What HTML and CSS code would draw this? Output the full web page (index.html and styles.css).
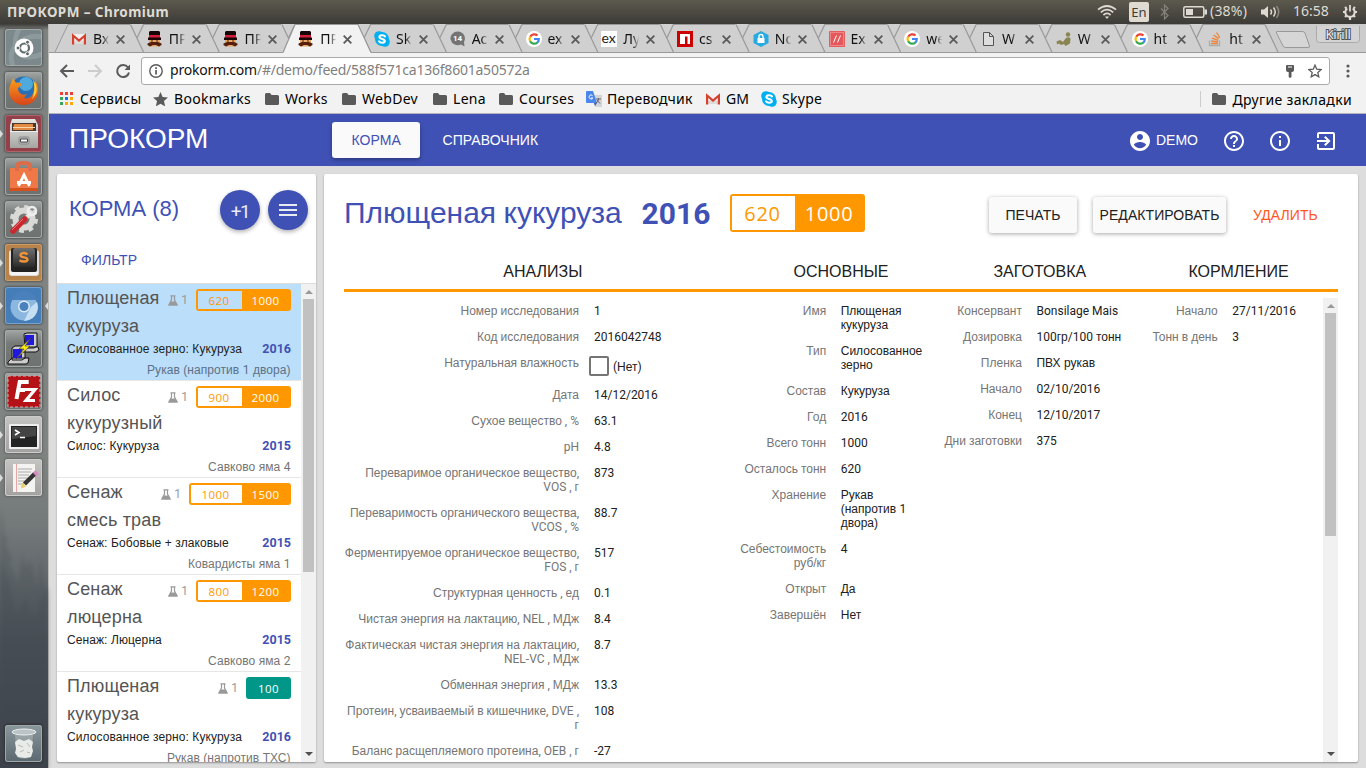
FILE: index.html
```html
<!DOCTYPE html>
<html lang="ru">
<head>
<meta charset="utf-8">
<title>ПРОКОРМ</title>
<link rel="stylesheet" href="styles.css">
</head>
<body>
<svg width="0" height="0" class="defs">
  <defs>
    <linearGradient id="ff" x1="0" y1="0" x2="0" y2="1"><stop offset="0" stop-color="#f8a01c"/><stop offset="1" stop-color="#d9431a"/></linearGradient>
    <linearGradient id="cab" x1="0" y1="0" x2="0" y2="1"><stop offset="0" stop-color="#e6e6e2"/><stop offset="1" stop-color="#a5a5a1"/></linearGradient>
    <linearGradient id="key" x1="0" y1="0" x2="0" y2="1"><stop offset="0" stop-color="#707070"/><stop offset="1" stop-color="#2b2b2b"/></linearGradient>
  </defs>
  <symbol id="gmail" viewBox="0 0 16 16"><path d="M1 3h14v10H1z" fill="#f3f1f0"/><path d="M1 13l5-5 2 2 2-2 5 5z" fill="#dedbd9"/><path d="M2.100 13.500V4.500l5.900 5 5.900-5v9" fill="none" stroke="#d5402f" stroke-width="2.200"/></symbol>
  <symbol id="hat" viewBox="0 0 16 16"><path d="M3 0h9l1 1v4H2V1z" fill="#160606"/><path d="M2 4h11v3H2z" fill="#d51f3a"/><path d="M1 6.500h13V9H1z" fill="#1a0606"/><path d="M2 9h11v6.500H2z" fill="#e8a765"/><path d="M4 9.500h2v1H4zM9 9.500h2v1H9z" fill="#552211"/><path d="M.5 12.500L4 11h7l3.500 1.500V14L12 15.500 9 14H6l-3 1.500L.5 14z" fill="#57200d"/></symbol>
  <symbol id="skype" viewBox="0 0 16 16"><circle cx="5" cy="5" r="4.800" fill="#00aff0"/><circle cx="11" cy="11" r="4.800" fill="#00aff0"/><circle cx="8" cy="8" r="7" fill="#00aff0"/><path d="M11 5.400C10 3.800 5.400 3.900 5.400 6c0 2.300 5.400 1.500 5.400 4 0 2.200-4.600 2.200-5.800.3" fill="none" stroke="#fff" stroke-width="2.100" stroke-linecap="round"/></symbol>
  <symbol id="google" viewBox="0 0 16 16"><circle cx="8" cy="8" r="8" fill="#fff"/><g fill="none" stroke-width="2.200"><path d="M4.200 5.700A4.800 4.800 0 0 1 11.500 4.500" stroke="#ea4335"/><path d="M4.200 5.600a4.900 4.900 0 0 0 0 4.800" stroke="#fbbc05"/><path d="M4.100 10.300a4.800 4.800 0 0 0 7.200 1.300" stroke="#34a853"/><path d="M8 8h4.800a4.800 4.800 0 0 1-1.600 3.700" stroke="#4285f4"/></g></symbol>
  <symbol id="x" viewBox="0 0 8 8"><path d="M.6.6l6.800 6.800M7.400.6L.6 7.400" stroke="#5a5a5a" stroke-width="1.600"/></symbol>
  <symbol id="folder" viewBox="0 0 14 12"><path d="M0 1.500Q0 0 1.500 0H5l1.500 2H12.500Q14 2 14 3.500V10.500Q14 12 12.500 12H1.500Q0 12 0 10.500z" fill="#5a5a5a"/></symbol>
  <symbol id="edge" overflow="visible"><path d="M-13 .5L0 28M-6.500 14L0 .5H62" fill="none" stroke="#999" stroke-width="1.200"/></symbol>
  <symbol id="flask" viewBox="0 0 10 11"><path d="M2.500.8h5M3.500 1v4L.8 10h8.400L6.500 5V1" fill="none" stroke="#999" stroke-width="1.200"/><path d="M2.500 6.500h5L9.500 10.500H.5z" fill="#999"/></symbol>
</svg>

<header class="topbar">
  <span class="topbar-title">ПРОКОРМ – Chromium</span>
  <div class="tray">
    <svg class="t-wifi" width="20" height="14" viewBox="0 0 20 14" fill="none" stroke="#dfdbd2" stroke-width="1.700"><path d="M1 4.600Q10-2.600 19 4.600M3.800 7.300Q10 2 16.200 7.300M6.400 10Q10 6.800 13.600 10"/><path d="M8 11.500h4L10 14z" fill="#dfdbd2" stroke="none"/></svg>
    <span class="t-lang">En</span>
    <svg class="t-bt" width="10" height="16" viewBox="0 0 10 16" fill="none" stroke="#85827a" stroke-width="1.200"><path d="M1 4.500l7 7-3.500 3.500V1L8 4.500l-7 7"/></svg>
    <svg class="t-bat" width="24" height="12" viewBox="0 0 24 12"><rect x=".8" y=".8" width="20" height="10.400" rx="1.500" fill="none" stroke="#dfdbd2" stroke-width="1.500"/><path d="M3 3h7v6H3zM21.500 3.500H24v5h-2.500z" fill="#dfdbd2"/></svg>
    <span class="t-pct">(38%)</span>
    <svg class="t-vol" width="20" height="14" viewBox="0 0 20 14" fill="none" stroke="#dfdbd2" stroke-width="1.500"><path d="M0 4.500h3L7 1v12L3 9.500H0z" fill="#dfdbd2" stroke="none"/><path d="M9.500 4.500q2 2.500 0 5M12.500 2.500q3.500 4.500 0 9"/><path d="M15.500 1q4.500 6 0 12" stroke="#8a877e"/></svg>
    <span class="t-time">16:58</span>
    <svg class="t-gear" width="16" height="16" viewBox="0 0 16 16" fill="none" stroke="#dfdbd2"><path d="M5.200 4.400a4.700 4.700 0 1 0 5.600 0" stroke-width="2"/><path d="M8 1v6.500" stroke-width="1.800"/><path d="M1 8h2M13 8h2M8 13v3M3 13l1.500-1.500M13 13l-1.500-1.500M3 3l1.300 1.300M13 3l-1.300 1.300" stroke-width="2.200"/></svg>
  </div>
</header>

<div class="desktop">
<nav class="launcher">
  <svg class="trees" width="48" height="270" viewBox="0 0 48 270"><path d="M0 10l4 18-2 2 6 14-3 1 8 18-4 1 9 22 4-30 4 14 5-8 6 28 3-32 4 28 4 10v174H0z" fill="#3e464b" opacity=".25"/><path d="M0 60l10 30 6 26 10-16 8 20 12-30 2 0v180H0z" fill="#3e464b" opacity=".2"/></svg>
  <div class="tile ubuntu"><svg viewBox="0 0 37 37"><path d="M8 37C0 18 20 4 37 8M14 0C3 22 18 34 37 25" stroke="#b0babd" stroke-width="5" fill="none" opacity=".35"/><circle cx="19" cy="19" r="9.500" fill="#fff"/><circle cx="19.500" cy="19" r="4.500" fill="none" stroke="#606a6c" stroke-width="2.200"/><g fill="#606a6c" stroke="#fff"><circle cx="13" cy="19" r="2"/><circle cx="22.500" cy="13.200" r="2"/><circle cx="22.500" cy="24.800" r="2"/></g></svg></div>
  <div class="tile"><svg viewBox="0 0 37 37"><circle cx="19" cy="18" r="13.500" fill="#2a6fb5"/><circle cx="21" cy="12" r="7" fill="#4fa9dc"/><path d="M4 16L8 6l3 5c3-1 5 0 6 2l-4 3c0 5 4 8 9 6l-3 4c5 2 10-3 10-9l1-8c7 9 2 24-11 24C9 33 3 25 4 16z" fill="url(#ff)"/><path d="M28 8c6 7 4 15-1 19 3-7 3-13 1-19z" fill="#fbd535"/></svg></div>
  <div class="tile files"><i class="pip"></i><svg viewBox="0 0 37 37"><path d="M7 4h23l3 6v23H5V10z" fill="url(#cab)"/><path d="M7 8h24v8H7z" fill="#463b33"/><path d="M9 9h19v6H8z" fill="#e58a43"/><path d="M8 12h22v1H8z" fill="#f8d8a8"/><path d="M5 16.500h28" stroke="#eee"/><rect x="14" y="22" width="10" height="7" rx="1.500" fill="#bbb" stroke="#888"/><path d="M15.500 24h7v3h-7z" fill="#fff" stroke="#444"/></svg></div>
  <div class="tile"><svg viewBox="0 0 37 37"><path d="M5 10h28v22H5z" fill="#f07746"/><path d="M5 30h28v3H5z" fill="#d2511c"/><path d="M12 13V8q0-3 6.500-3T25 8v5" fill="none" stroke="#dc6d48" stroke-width="4"/><path d="M13.500 28L19 17l5.500 11M12 24.500h14" fill="none" stroke="#fff" stroke-width="2.800"/></svg></div>
  <div class="tile"><svg viewBox="0 0 37 37"><circle cx="19" cy="18" r="8.500" fill="none" stroke="#d9d9d6" stroke-width="6"/><circle cx="19" cy="18" r="12" fill="none" stroke="#d9d9d6" stroke-width="4" stroke-dasharray="4.700"/><path d="M27 11L18 20" stroke="#e5e5e3" stroke-width="4"/><circle cx="27" cy="10" r="4" fill="none" stroke="#eee" stroke-width="2.500"/><path d="M20 18L8 30" stroke="#c9292e" stroke-width="5.500" stroke-linecap="round"/><path d="M18 18L7 29" stroke="#ec7777" stroke-width="1"/></svg></div>
  <div class="tile sublime"><i class="pip"></i><svg viewBox="0 0 37 37"><rect x="4" y="6" width="30" height="26" rx="3" fill="#ddd"/><rect x="5" y="27" width="28" height="4" rx="2" fill="#f4f4f4"/><rect x="6" y="4" width="26" height="24" rx="2" fill="#222"/><rect x="8" y="4" width="22" height="19" rx="2" fill="url(#key)"/><path d="M22.500 10.500c-2-2-7-2-7 .7s7 1.600 7 4.300-5.500 2.500-8 .7" fill="none" stroke="#f29436" stroke-width="2.400"/></svg></div>
  <div class="tile chromium"><i class="pip"></i><i class="pip right"></i><svg viewBox="0 0 37 37"><circle cx="19" cy="20" r="13.500" fill="#8cb7df"/><path d="M6 13a14 14 0 0 1 26 0H19z" fill="#4a80bb"/><path d="M32 15a14 14 0 0 1-13 19l7-14z" fill="#c6dff3"/><circle cx="19" cy="19.500" r="6" fill="#dcecf8"/><circle cx="19" cy="19.500" r="4.500" fill="#4a82bd"/></svg></div>
  <div class="tile"><svg viewBox="0 0 37 37"><g stroke="#111" fill="#ccc"><path d="M19 4l3-1h10v13l-3 2h-9zM16 20l4-3h13l1 3-3 2H16zM7 18l3-2h10v12l-3 2H7zM3 32l4-4h17l-1 5-2 1H3z"/></g><path d="M20 5h9v10h-9zM8 19h9v9H8z" fill="#2018df"/><path d="M26 8L14 19h5l-8 10 14-13h-5z" fill="#ffec12" stroke="#333" stroke-width=".6"/></svg></div>
  <div class="tile"><svg viewBox="0 0 37 37"><rect x="3" y="3" width="32" height="31" fill="#b51217" stroke="#d9adad" stroke-dasharray="3 2"/><path d="M11.500 26l3.200-17h9M13 17h7" stroke="#fff" stroke-width="4" fill="none"/><path d="M20 16.500h10l-9 11h9" stroke="#fff" stroke-width="3.200" fill="none"/></svg></div>
  <div class="tile light"><i class="pip"></i><svg viewBox="0 0 37 37"><rect x="4" y="8" width="30" height="25" rx="1" fill="#eee"/><rect x="6" y="10" width="26" height="21" fill="#222"/><path d="M7 11h24v9L7 23z" fill="#444"/><path d="M10 14l4 2.500-4 2.500M15 21.500h5" fill="none" stroke="#fff" stroke-width="1.600"/></svg></div>
  <div class="tile light"><i class="pip"></i><svg viewBox="0 0 37 37"><path d="M8 5h22v28H8z" fill="#f3f3ef"/><path d="M11.500 5v28" stroke="#e9a5a5"/><path d="M13 10h14M13 13h13M13 16h11M13 19h12M13 22h8M13 25h6" stroke="#aaa"/><path d="M30 14.500L19.500 25" stroke="#333" stroke-width="4.500"/><path d="M17 23.500l4 4-5 2z" fill="#e6cd65"/><path d="M32 13l-2.500 2.500" stroke="#d889bd" stroke-width="5"/></svg></div>
  <div class="tile trash"><svg viewBox="0 0 37 37"><path d="M10 10l2 22q7 3 14 0l2-22" fill="#aab4b5" opacity=".6"/><ellipse cx="19" cy="7" rx="12" ry="3" fill="#bac3c5" stroke="#eef1f1"/><path d="M10 17l4-3 5 2 5-2 4 3-1 5 1 4-2 6-6 1-7-1-3-4 1-4z" fill="#e9ebe8"/><path d="M13 20l5 2M22 18l3 4M15 27l4-2M22 27l3 1" stroke="#b5b9b5"/></svg></div>
</nav>

<div class="window">
  <div class="tabstrip">
    <svg class="tab-lines" width="1317" height="29" viewBox="49 0 1317 29">
      <path d="M49 29V0H1366V29z" fill="#ccc"/>
      <path d="M55 28L68 0H1265L1278 28z" fill="#d0d0d0"/>
      <path d="M55 28L68 .5H130M49 28.500H283M371 28.500H1366" fill="none" stroke="#999"/>
      <use href="#edge" x="143.500"/><use href="#edge" x="219.200"/><use href="#edge" x="295"/>
      <use href="#edge" x="370.600"/><use href="#edge" x="446.300"/><use href="#edge" x="522"/><use href="#edge" x="597.700"/><use href="#edge" x="673.400"/><use href="#edge" x="749.100"/><use href="#edge" x="824.800"/><use href="#edge" x="900.500"/><use href="#edge" x="976.200"/><use href="#edge" x="1051.900"/><use href="#edge" x="1127.400"/><use href="#edge" x="1202.900"/>
      <path d="M1265 .5L1278 28" stroke="#999" stroke-width="1.200"/>
      <path d="M283 29L295 .5H358L371 29z" fill="#f2f2f2"/><path d="M283 28.500L295 .5H358L371 28.500" fill="none" stroke="#999" stroke-width="1.200"/>
      <path d="M1277 7.500H1302Q1304 7.500 1305 9L1309.500 22Q1310 23.500 1308 23.500H1286Q1284 23.500 1283 22L1276.500 9Q1276 7.500 1277 7.500z" fill="#d6d6d6" stroke="#999"/>
      <path d="M1316.500 2V15.500Q1316.500 18.500 1319.500 18.500H1356.500Q1359.500 18.500 1359.500 15.500V2" fill="#d4d4d4" stroke="#aaa"/>
    </svg>
    <div class="tabs">
      <div class="tab"><svg class="fav"><use href="#gmail"/></svg><b>Вх</b><svg class="x"><use href="#x"/></svg></div>
      <div class="tab"><svg class="fav"><use href="#hat"/></svg><b>ПР</b><svg class="x"><use href="#x"/></svg></div>
      <div class="tab"><svg class="fav"><use href="#hat"/></svg><b>ПР</b><svg class="x"><use href="#x"/></svg></div>
      <div class="tab"><svg class="fav"><use href="#hat"/></svg><b>ПР</b><svg class="x"><use href="#x"/></svg></div>
      <div class="tab"><svg class="fav"><use href="#skype"/></svg><b>Sk</b><svg class="x"><use href="#x"/></svg></div>
      <div class="tab"><svg class="fav" viewBox="0 0 16 16"><path d="M8 .5a7.300 6.800 0 1 0 3 12.900l3.500 2-.5-4.400A7 7 0 0 0 8 .5z" fill="#747474"/><text x="3" y="10" class="fav-n">14</text></svg><b>Ас</b><svg class="x"><use href="#x"/></svg></div>
      <div class="tab"><svg class="fav"><use href="#google"/></svg><b>ex</b><svg class="x"><use href="#x"/></svg></div>
      <div class="tab"><svg class="fav" viewBox="0 0 16 16"><path d="M0 0h16v16H0z" fill="#fff"/><text x=".5" y="12" class="fav-ex">ex</text></svg><b>Лу</b><svg class="x"><use href="#x"/></svg></div>
      <div class="tab"><svg class="fav" viewBox="0 0 16 16"><path d="M0 0h16v16H0z" fill="#c00"/><path d="M3 3h10v10h-2.500V5.500H8V13H3z" fill="#fff"/></svg><b>cs</b><svg class="x"><use href="#x"/></svg></div>
      <div class="tab"><svg class="fav" viewBox="0 0 16 16"><path d="M8 0l7.500 4v8L8 16 .5 12V4z" fill="#27aae1"/><path d="M4.500 7h7v5h-7z" fill="#fff"/><path d="M6 7V5.500a2 2 0 0 1 4 0V7" fill="none" stroke="#fff" stroke-width="1.400"/></svg><b>No</b><svg class="x"><use href="#x"/></svg></div>
      <div class="tab"><svg class="fav" viewBox="0 0 16 16"><path d="M.5.5h15v15H.5z" fill="#ee8586" stroke="#e65b5e"/><path d="M2 2h12v12H2z" fill="#e4575a"/><path d="M4.500 11.500l3-7M8.500 11.500l3-7" stroke="#fff"/></svg><b>Ex</b><svg class="x"><use href="#x"/></svg></div>
      <div class="tab"><svg class="fav"><use href="#google"/></svg><b>we</b><svg class="x"><use href="#x"/></svg></div>
      <div class="tab"><svg class="fav" viewBox="0 0 16 16"><path d="M3.500 1.500h6l4 4v9h-10zM9.500 1.500v4h4" fill="#ddd" stroke="#555"/></svg><b>W</b><svg class="x"><use href="#x"/></svg></div>
      <div class="tab"><svg class="fav" viewBox="0 0 16 16"><circle cx="12" cy="3.500" r="2.200" fill="#8a8450"/><path d="M.5 10.500l3.500-1.500 3 2 2.500-3.500q3-2.500 5 0l-.5 5-4.500 2.500-1.500-2-3 1-2-1.500-2 1z" fill="#8a8450"/></svg><b>W</b><svg class="x"><use href="#x"/></svg></div>
      <div class="tab"><svg class="fav"><use href="#google"/></svg><b>ht</b><svg class="x"><use href="#x"/></svg></div>
      <div class="tab"><svg class="fav" viewBox="0 0 16 16" fill="none"><path d="M2.500 9.500V14.500H12.500V9.500" stroke="#aaa" stroke-width="1.300"/><path d="M4 12.500h7M4.200 10l6.800.9M5 7.200l6.200 2.200M6.500 4l5.300 3.600M9.500 1.500l3.300 5" stroke="#ef8236" stroke-width="1.300"/></svg><b>ht</b><svg class="x"><use href="#x"/></svg></div>
    </div>
    <span class="user-chip">Kirill</span>
  </div>
  <div class="toolbar">
    <svg class="nav-icons" width="92" height="30" viewBox="0 0 92 30" fill="none" stroke-width="2"><path d="M25 15H12M18 9l-6 6 6 6" stroke="#5a5a5a"/><path d="M39 15h13M46 9l6 6-6 6" stroke="#ccc"/><path d="M79 11.500a6 6 0 1 0 1 5" stroke="#5a5a5a"/><path d="M81 8.500V14h-5.500z" fill="#5a5a5a"/></svg>
    <div class="omnibox">
      <svg width="14" height="14" viewBox="0 0 14 14"><circle cx="7" cy="7" r="6.200" fill="none" stroke="#5a5a5a" stroke-width="1.400"/><path d="M6.200 6h1.700v4.500H6.200zM6.200 3.300h1.700V5H6.200z" fill="#5a5a5a"/></svg>
      <span class="url">prokorm.com<em>/#/demo/feed/588f571ca136f8601a50572a</em></span>
      <svg class="key" width="8" height="13" viewBox="0 0 8 13"><path d="M0 1q0-1 1-1h6q1 0 1 1v4q0 2-2 2H5.500v5L4 13 2.700 12V7H2Q0 7 0 5z" fill="#5a5a5a"/><path d="M2 2h4" stroke="#fff"/></svg>
      <svg width="14" height="14" viewBox="0 0 24 24"><path d="M12 2l3 7 7.500.700-5.700 5 1.700 7.300L12 18.200 5.500 22l1.700-7.300-5.700-5L9 9z" fill="none" stroke="#5a5a5a" stroke-width="2.200"/></svg>
    </div>
    <svg class="menu" width="4" height="14" viewBox="0 0 4 14" fill="#5a5a5a"><circle cx="2" cy="2" r="1.600"/><circle cx="2" cy="7" r="1.600"/><circle cx="2" cy="12" r="1.600"/></svg>
  </div>
  <div class="bookmarks">
    <div class="bm b1"><svg width="13" height="13" viewBox="0 0 13 13"><path d="M0 0h3v3H0zM5 0h3v3H5zM10 0h3v3h-3z" fill="#ea4335"/><path d="M0 5h3v3H0zM0 10h3v3H0z" fill="#34a853"/><path d="M5 5h3v3H5z" fill="#1a73e8"/><path d="M10 5h3v3h-3zM5 10h3v3H5zM10 10h3v3h-3z" fill="#fbab05"/></svg>Сервисы</div>
    <div class="bm b2"><svg width="15" height="14" viewBox="1 1 22 21"><path d="M12 1l3.200 7.600 8 .700-6 5.300 1.800 8L12 18.500 5 22.600l1.800-8-6-5.300 8-.7z" fill="#5a5a5a"/></svg>Bookmarks</div>
    <div class="bm b3"><svg width="14" height="12"><use href="#folder"/></svg>Works</div>
    <div class="bm b4"><svg width="14" height="12"><use href="#folder"/></svg>WebDev</div>
    <div class="bm b5"><svg width="14" height="12"><use href="#folder"/></svg>Lena</div>
    <div class="bm b6"><svg width="14" height="12"><use href="#folder"/></svg>Courses</div>
    <div class="bm b7"><svg width="16" height="16" viewBox="0 0 16 16"><path d="M6 4h10v12H9z" fill="#d5d5d5"/><path d="M0 1q0-1 1-1h6l4 12H1q-1 0-1-1z" fill="#4a86ee"/><path d="M8 12h3l-2 3z" fill="#2a56c6"/><path d="M6.500 4.500a2 2 0 1 0 .3 2.500H5" fill="none" stroke="#fff"/><path d="M10 8h5M12.500 7v1q0 3-2.500 4M11 9l3 3.500" fill="none" stroke="#667"/></svg>Переводчик</div>
    <div class="bm b8"><svg width="16" height="16"><use href="#gmail"/></svg>GM</div>
    <div class="bm b9"><svg width="16" height="16"><use href="#skype"/></svg>Skype</div>
    <div class="bm other"><svg width="14" height="12"><use href="#folder"/></svg>Другие закладки</div>
  </div>

  <div class="app">
    <div class="appbar">
      <h1>ПРОКОРМ</h1>
      <a class="navbtn active">КОРМА</a><a class="navbtn">СПРАВОЧНИК</a>
      <div class="actions">
        <svg viewBox="0 0 24 24"><path d="M12 2C6.480 2 2 6.480 2 12s4.480 10 10 10 10-4.480 10-10S17.520 2 12 2zm0 3c1.660 0 3 1.340 3 3s-1.340 3-3 3-3-1.340-3-3 1.340-3 3-3zm0 14.200c-2.500 0-4.710-1.280-6-3.220.030-1.990 4-3.080 6-3.080 1.990 0 5.970 1.090 6 3.080-1.290 1.940-3.500 3.220-6 3.220z"/></svg>
        <span class="demo">DEMO</span>
        <svg class="help" viewBox="0 0 24 24"><path d="M11 18h2v-2h-2v2zm1-16C6.480 2 2 6.480 2 12s4.480 10 10 10 10-4.480 10-10S17.520 2 12 2zm0 18c-4.410 0-8-3.590-8-8s3.590-8 8-8 8 3.590 8 8-3.590 8-8 8zm0-14c-2.210 0-4 1.790-4 4h2c0-1.100.9-2 2-2s2 .9 2 2c0 2-3 1.750-3 5h2c0-2.250 3-2.500 3-5 0-2.210-1.790-4-4-4z"/></svg>
        <svg class="info" viewBox="0 0 24 24"><path d="M11 17h2v-6h-2v6zm1-15C6.480 2 2 6.480 2 12s4.480 10 10 10 10-4.480 10-10S17.520 2 12 2zm0 18c-4.410 0-8-3.590-8-8s3.590-8 8-8 8 3.590 8 8-3.590 8-8 8zM11 9h2V7h-2v2z"/></svg>
        <svg class="exit" viewBox="0 0 24 24"><path d="M10.090 15.590L11.500 17l5-5-5-5-1.410 1.410L12.670 11H3v2h9.670l-2.580 2.590zM19 3H5c-1.110 0-2 .9-2 2v4h2V5h14v14H5v-4H3v4c0 1.100.890 2 2 2h14c1.100 0 2-.9 2-2V5c0-1.100-.9-2-2-2z"/></svg>
      </div>
    </div>

    <div class="content">
      <aside class="card side">
        <div class="side-head"><h2>КОРМА <span>(8)</span></h2><span class="fab plus">+1</span><span class="fab"><svg width="24" height="24" viewBox="0 0 24 24"><path d="M3 18h18v-2H3v2zm0-5h18v-2H3v2zm0-7v2h18V6H3z" fill="#e8eaf6"/></svg></span></div>
        <div class="filter">ФИЛЬТР</div>
        <div class="list">
          <div class="items">
            <div class="item sel"><div class="row1"><span class="name">Плющеная кукуруза</span><span class="lab r"><svg><use href="#flask"/></svg>1</span><span class="badge"><i>620</i><u>1000</u></span></div><div class="row2"><span>Силосованное зерно: Кукуруза</span><b class="r">2016</b></div><div class="row3">Рукав (напротив <span class="r">1</span> двора)</div></div>
            <div class="item"><div class="row1"><span class="name">Силос кукурузный</span><span class="lab r"><svg><use href="#flask"/></svg>1</span><span class="badge"><i>900</i><u>2000</u></span></div><div class="row2"><span>Силос: Кукуруза</span><b class="r">2015</b></div><div class="row3">Савково яма <span class="r">4</span></div></div>
            <div class="item"><div class="row1"><span class="name">Сенаж смесь трав</span><span class="lab r"><svg><use href="#flask"/></svg>1</span><span class="badge wide"><i>1000</i><u>1500</u></span></div><div class="row2"><span>Сенаж: Бобовые + злаковые</span><b class="r">2015</b></div><div class="row3">Ковардисты яма <span class="r">1</span></div></div>
            <div class="item"><div class="row1"><span class="name">Сенаж люцерна</span><span class="lab r"><svg><use href="#flask"/></svg>1</span><span class="badge"><i>800</i><u>1200</u></span></div><div class="row2"><span>Сенаж: Люцерна</span><b class="r">2015</b></div><div class="row3">Савково яма <span class="r">2</span></div></div>
            <div class="item"><div class="row1"><span class="name">Плющеная кукуруза</span><span class="lab r"><svg><use href="#flask"/></svg>1</span><span class="badge teal"><u>100</u></span></div><div class="row2"><span>Силосованное зерно: Кукуруза</span><b class="r">2016</b></div><div class="row3">Рукав (напротив ТХС)</div></div>
          </div>
          <div class="scroll"><i class="up"></i><i class="thumb"></i><i class="down"></i></div>
        </div>
      </aside>

      <main class="card main">
        <div class="main-head">
          <h2>Плющеная кукуруза</h2><b class="year r">2016</b>
          <span class="badge big"><i>620</i><u>1000</u></span>
          <div class="buttons"><a class="btn print">ПЕЧАТЬ</a><a class="btn edit">РЕДАКТИРОВАТЬ</a><a class="del">УДАЛИТЬ</a></div>
        </div>
        <div class="heads"><span>АНАЛИЗЫ</span><span>ОСНОВНЫЕ</span><span>ЗАГОТОВКА</span><span>КОРМЛЕНИЕ</span></div>
        <div class="body">
          <dl class="wide">
            <dt>Номер исследования</dt><dd class="r">1</dd>
            <dt>Код исследования</dt><dd class="r">2016042748</dd>
            <dt>Натуральная влажность</dt><dd class="check"><i></i><span><span class="r">(</span>Нет<span class="r">)</span></span></dd>
            <dt>Дата</dt><dd class="r">14/12/2016</dd>
            <dt>Сухое вещество<span class="r"> , %</span></dt><dd class="r">63.1</dd>
            <dt class="r">pH</dt><dd class="r">4.8</dd>
            <dt>Переваримое органическое вещество<span class="r">,</span><br><span class="r">VOS , </span>г</dt><dd class="r">873</dd>
            <dt>Переваримость органического вещества<span class="r">,</span><br><span class="r">VCOS , %</span></dt><dd class="r">88.7</dd>
            <dt>Ферментируемое органическое вещество<span class="r">,</span><br><span class="r">FOS , </span>г</dt><dd class="r">517</dd>
            <dt>Структурная ценность<span class="r"> , </span>ед</dt><dd class="r">0.1</dd>
            <dt>Чистая энергия на лактацию<span class="r">, NEL , </span>МДж</dt><dd class="r">8.4</dd>
            <dt>Фактическая чистая энергия на лактацию<span class="r">,</span><br><span class="r">NEL-VC , </span>МДж</dt><dd class="r">8.7</dd>
            <dt>Обменная энергия<span class="r"> , </span>МДж</dt><dd class="r">13.3</dd>
            <dt>Протеин<span class="r">, </span>усваиваемый в кишечнике<span class="r">, DVE ,</span><br>г</dt><dd class="r">108</dd>
            <dt>Баланс расщепляемого протеина<span class="r">, OEB , </span>г</dt><dd class="r">-27</dd>
          </dl>
          <dl>
            <dt>Имя</dt><dd>Плющеная<br>кукуруза</dd>
            <dt>Тип</dt><dd>Силосованное<br>зерно</dd>
            <dt>Состав</dt><dd>Кукуруза</dd>
            <dt>Год</dt><dd class="r">2016</dd>
            <dt>Всего тонн</dt><dd class="r">1000</dd>
            <dt>Осталось тонн</dt><dd class="r">620</dd>
            <dt>Хранение</dt><dd>Рукав<br>(напротив <span class="r">1</span><br>двора)</dd>
            <dt>Себестоимость<br>руб/кг</dt><dd class="r">4</dd>
            <dt>Открыт</dt><dd>Да</dd>
            <dt>Завершён</dt><dd>Нет</dd>
          </dl>
          <dl>
            <dt>Консервант</dt><dd class="r">Bonsilage Mais</dd>
            <dt>Дозировка</dt><dd><span class="r">100</span>гр<span class="r">/100 </span>тонн</dd>
            <dt>Пленка</dt><dd>ПВХ рукав</dd>
            <dt>Начало</dt><dd class="r">02/10/2016</dd>
            <dt>Конец</dt><dd class="r">12/10/2017</dd>
            <dt>Дни заготовки</dt><dd class="r">375</dd>
          </dl>
          <dl>
            <dt>Начало</dt><dd class="r">27/11/2016</dd>
            <dt>Тонн в день</dt><dd class="r">3</dd>
          </dl>
          <div class="scroll"><i class="up"></i><i class="thumb"></i><i class="down"></i></div>
        </div>
      </main>
    </div>
  </div>
</div>
</div>
</body>
</html>
```
FILE: styles.css
```css
* { box-sizing: border-box; }
body { margin: 0; width: 1366px; height: 768px; overflow: hidden; font-family: "Liberation Sans", Arial, sans-serif; background: #ddd; }
h1, h2, dl, dd { margin: 0; font-weight: 400; }
i, em, u { font-style: normal; text-decoration: none; }
svg { display: block; flex: none; }
.defs { position: absolute; }
.r { font-family: Roboto, sans-serif; }

/* system panel */
.topbar { height: 24px; display: flex; justify-content: space-between; align-items: center; background: linear-gradient(#5c584b 0, #59564c 10%, #3d3b37 100%); color: #dfdbd2; font: 14px "Noto Sans", sans-serif; }
.topbar-title { padding-left: 7px; font-size: 13.500px; font-weight: 700; letter-spacing: .42px; }
.tray { width: 269px; display: flex; align-items: center; height: 24px; }
.t-lang { margin-left: 12px; width: 20px; height: 20px; border-radius: 2px; background: #dfdbd2; color: #3f3d38; font-size: 13px; line-height: 20px; text-align: center; }
.t-bt { margin-left: 11px; }
.t-bat { margin-left: 13px; }
.t-pct { margin-left: 3px; width: 39px; font-size: 14px; line-height: 22px; padding-bottom: 2px; letter-spacing: .2px; }
.t-vol { margin-left: 12px; }
.t-time { margin-left: 12px; width: 38px; line-height: 22px; padding-bottom: 2px; }
.t-gear { margin-left: 11px; }

.desktop { display: flex; height: 744px; }
.launcher { position: relative; width: 49px; flex: none; padding: 5px 0 6px 5px; display: flex; flex-direction: column; gap: 6px; border-right: 1px solid #b9b9b6; background: linear-gradient(#3c3c38 0, #7e8280 6px, #808482 420px, #747a7a 500px, #4c525b 620px, #3e414b 100%); }
.trees { position: absolute; left: 0; bottom: 0; filter: blur(2px); }
.tile { position: relative; width: 37px; height: 37px; flex: none; border-radius: 3px; background: linear-gradient(#a2a6a4, #767a78 35%, #6d716f); box-shadow: 0 0 2px 1px #555a59, inset 0 0 0 1px #a4a8a6; }
.tile svg { width: 37px; height: 37px; }
.ubuntu { background: #7c898c; }
.files { background: #93404a; box-shadow: 0 0 2px 1px #555a59, inset 0 0 0 1px #b1636a; }
.sublime { background: #b8834b; box-shadow: 0 0 2px 1px #555a59, inset 0 0 0 1px #cc9d62; }
.chromium { background: #457db9; box-shadow: 0 0 2px 1px #555a59, inset 0 0 0 1px #76a1cf; }
.light { background: linear-gradient(#c4c4c2, #a3a19f); box-shadow: 0 0 2px 1px #666, inset 0 0 0 1px #ccc; }
.trash { margin-top: auto; background: linear-gradient(#8a979b, #5b6870); box-shadow: 0 0 2px 1px #333, inset 0 0 0 1px #9ba7aa; }
.pip { position: absolute; left: -5px; top: 15px; border: 4px solid transparent; border-left: 3px solid #ddd; border-right: 0; }
.pip.right { left: auto; right: -6px; border-left: 0; border-right: 3px solid #ddd; }

.window { flex: 1; min-width: 0; display: flex; flex-direction: column; }
.tabstrip { position: relative; height: 29px; }
.tab-lines { position: absolute; left: 0; top: 0; }
.tabs { position: relative; display: flex; padding-left: 22px; height: 29px; }
.tab { width: 75.750px; display: flex; align-items: center; flex: none; font: 14px "Noto Sans", sans-serif; color: #111; }
.fav { width: 16px; height: 16px; margin-top: 1px; }
.fav-n { font: 700 8px Roboto, sans-serif; fill: #fff; }
.fav-ex { font: 14px Lato, sans-serif; fill: #222; }
.tab b { font-weight: 400; margin-left: 6px; width: 17px; white-space: nowrap; line-height: 20px; -webkit-mask-image: linear-gradient(90deg, #000 55%, transparent 96%); }
.x { width: 9px; height: 9px; margin-left: 6px; margin-top: 1px; }
.user-chip { position: absolute; right: 6px; top: 0; width: 44px; text-align: center; font: 13px/20px "Noto Sans", sans-serif; letter-spacing: -.3px; color: #eee; -webkit-text-stroke: 2px #555; paint-order: stroke fill; }

.toolbar { height: 33px; display: flex; background: #f2f2f2; padding-top: 3px; }
.omnibox { margin-top: 1px; width: 1189px; height: 28px; border: 1px solid #aaa; border-radius: 3px; background: #fff; display: flex; align-items: center; padding: 0 7px; }
.url { margin-left: 7px; font: 14px/22px "Noto Sans", sans-serif; letter-spacing: -.23px; color: #111; flex: 1; padding-bottom: 2px; }
.url em { color: #808080; }
.key { margin-right: 14px; }
.menu { margin: 8px 0 0 16px; }
.bookmarks { height: 28px; display: flex; background: #f2f2f2; border-bottom: 1px solid #b6b4b6; padding-left: 11px; font: 14px "Noto Sans", sans-serif; letter-spacing: .3px; color: #000; }
.bm { display: flex; align-items: center; gap: 6px; white-space: nowrap; flex: none; height: 25px; }
.b1 { width: 93px; gap: 7px; }
.b2 { width: 112px; gap: 6px; }
.b3 { width: 77px; }
.b4 { width: 91px; }
.b5 { width: 66px; }
.b6 { width: 87px; }
.b7 { width: 119px; gap: 5px; }
.b8 { width: 56px; gap: 5px; letter-spacing: 0; }
.b9 { width: 80px; gap: 5px; }
.other { margin-left: auto; margin-right: 14px; margin-top: 5px; height: 16px; padding-left: 11px; border-left: 1px solid #ccc; letter-spacing: .35px; }

.app { flex: 1; min-height: 0; display: flex; flex-direction: column; background: #ddd; }
.appbar { height: 52px; background: #3f51b5; color: #fff; display: flex; align-items: center; padding-left: 20px; font-size: 14px; }
.appbar h1 { width: 263px; font-size: 28px; line-height: 50px; height: 52px; }
.navbtn { height: 36px; line-height: 36px; border-radius: 3px; padding: 0 20px 0 19.500px; margin-right: 3px; letter-spacing: .07px; }
.navbtn.active { background: #fafafa; color: #3f51b5; box-shadow: 0 2px 4px rgba(0,0,0,.3); width: 88px; }
.actions { margin-left: auto; display: flex; align-items: center; padding-right: 28px; padding-top: 2px; }
.actions svg { width: 24px; height: 24px; fill: #fff; }
.demo { margin-left: 4px; margin-top: -3px; width: 44px; }
.help, .info, .exit { margin-left: 22px; }

.content { flex: 1; min-height: 0; display: flex; gap: 8px; padding: 8px 8px 6px; }
.card { background: #fff; border-radius: 2px; box-shadow: 0 1px 2px rgba(0,0,0,.35); overflow: hidden; }
.side { width: 259px; display: flex; flex-direction: column; }
.side-head { display: flex; align-items: flex-start; padding: 16px 8px 0 12px; height: 68px; color: #3f51b5; gap: 8px; }
.side-head h2 { flex: 1; font-size: 22px; line-height: 38px; white-space: nowrap; }
.fab { width: 40px; height: 40px; border-radius: 50%; background: #3f51b5; color: #e8eaf6; display: flex; align-items: center; justify-content: center; box-shadow: 0 2px 4px rgba(0,0,0,.3); }
.plus { font: 400 19px Roboto, sans-serif; letter-spacing: -1.500px; padding-top: 2px; }
.filter { height: 42px; border-bottom: 1px solid #ddd; padding-left: 24px; font-size: 14px; line-height: 36px; color: #3f51b5; letter-spacing: .1px; }
.list { flex: 1; min-height: 0; display: flex; }
.items { width: 244px; overflow: hidden; }
.item { height: 97px; border-bottom: 1px solid #e6e6e6; padding: 0 10px; font-size: 12px; }
.sel { background: #bbdefb; }
.row1 { display: flex; align-items: flex-start; height: 56px; }
.name { font-size: 18px; line-height: 28px; color: #555; width: 95px; letter-spacing: .15px; white-space: normal; }
.lab { margin-left: auto; margin-right: 8px; display: flex; gap: 3px; align-items: center; height: 32px; color: #999; }
.lab svg { width: 10px; height: 11px; }
.badge { display: flex; margin-top: 5px; height: 22px; width: 95px; border: 2px solid #ff9800; border-radius: 3px; background: #ff9800; color: #fff; font: 11.500px/20px "Open Sans", sans-serif; letter-spacing: .45px; text-align: center; flex: none; }
.badge i { flex: 43; background: #fff; color: #ff9800; padding-right: 2px; }
.badge u { flex: 48; }
.sel .badge i { background: #bbdefb; }
.badge.wide { width: 102px; }
.wide.badge i { flex: 50; }
.badge.teal { width: 45px; background: #009688; border-color: #009688; }
.row2 { display: flex; justify-content: space-between; line-height: 18px; height: 20px; color: #222; white-space: nowrap; letter-spacing: .09px; }
.row2 b { color: #3f51b5; font-size: 12.500px; letter-spacing: 0; }
.row3 { text-align: right; line-height: 20px; color: #757575; letter-spacing: .06px; padding-right: .500px; white-space: nowrap; }
.sel .row3 { color: #5c7186; }

.scroll { width: 15px; background: #f1f1f1; display: flex; flex-direction: column; align-items: center; flex: none; }
.scroll .up { margin: 6px 0 5px; border: 4px solid transparent; border-top: 0; border-bottom-color: #999; }
.scroll .thumb { width: 11px; height: 273px; background: #c1c1c1; }
.scroll .down { margin: auto 0 6px; border: 4px solid transparent; border-bottom: 0; border-top-color: #505050; }

.main { flex: 1; display: flex; flex-direction: column; padding: 0 20px; }
.main-head { height: 78px; display: flex; color: #3f51b5; padding-top: 20px; align-items: flex-start; }
.main-head h2 { font-size: 30px; line-height: 38px; width: 297px; white-space: nowrap; word-spacing: -1px; }
.year { font-size: 30px; line-height: 40px; width: 89px; padding-left: .500px; }
.badge.big { margin-top: 0; width: 135px; height: 38px; font-size: 20px; line-height: 35px; letter-spacing: .7px; }
.big i { flex: 62; }
.big u { flex: 69; }
.buttons { margin-left: auto; display: flex; font-size: 14px; line-height: 36px; margin-top: 3px; letter-spacing: .06px; }
.btn { background: #fafafa; color: #212121; border-radius: 3px; box-shadow: 0 1px 4px rgba(0,0,0,.35); text-align: center; height: 36px; }
.print { width: 88px; }
.edit { width: 133px; margin-left: 16px; }
.del { color: #ff5722; margin: 0 20px 0 27px; width: 65px; }
.heads { height: 40px; display: grid; grid-template-columns: 2fr 1fr 1fr 1fr; text-align: center; font-size: 16px; line-height: 39px; color: #212121; border-bottom: 3px solid #ff9800; }
.body { flex: 1; min-height: 0; margin-top: 6px; display: flex; font-size: 12px; line-height: 14px; color: #212121; overflow: hidden; }
dl { width: 195.800px; display: grid; grid-template-columns: 90.500px 1fr; column-gap: 14.500px; row-gap: 12px; align-content: start; padding-top: 6px; height: 600px; white-space: nowrap; }
dl.wide { width: 391.800px; grid-template-columns: 235px 1fr; column-gap: 15px; }
dt { text-align: right; color: #757575; word-spacing: -.3px; }
dt .r { word-spacing: 0; }
dt, dt .r { line-height: 14px; }
.check { display: flex; align-items: flex-start; height: 20px; margin-left: -5px; gap: 4px; }
.check i { width: 20px; height: 20px; border: 2px solid #757575; border-radius: 2px; }
.check > span { padding-top: 4px; }
.body .scroll { height: 464px; }
.body .thumb { height: 223px; }
```
